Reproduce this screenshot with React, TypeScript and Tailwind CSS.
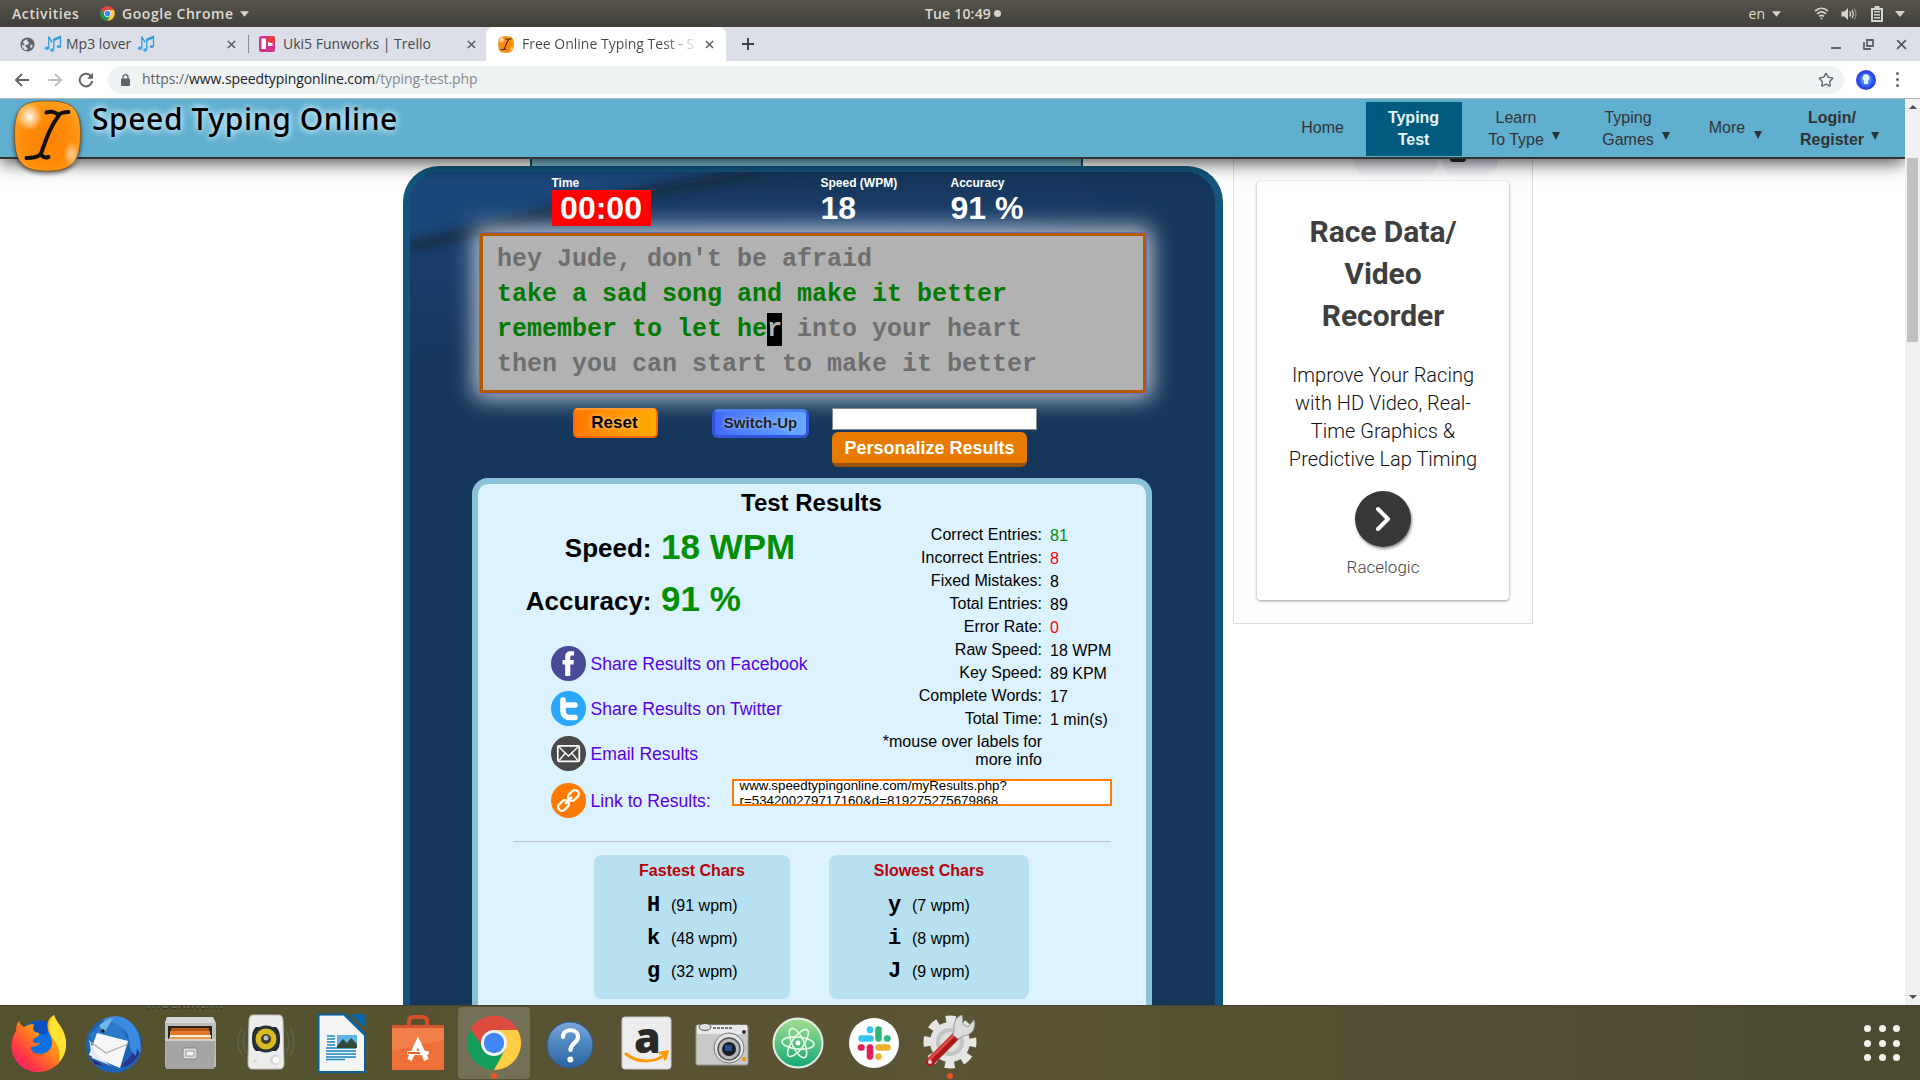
import React from "react";
import { ChevronRight, Star } from "lucide-react";

const UBUNTU = "font-['Open_Sans',sans-serif]";
const SANS = "font-['Liberation_Sans',Arial,sans-serif]";

function ChromeLogo({ className }: { className?: string }) {
  return (
    <svg viewBox="0 0 56 56" className={className}>
      <circle cx="28" cy="28" r="27" fill="#dd4b3e" />
      <path d="M28 28 L5 14 A27 27 0 0 0 28 55 L40 35 Z" fill="#129e5a" />
      <path d="M28 15 H51.7 A27 27 0 0 1 28 55 L39.5 34 Z" fill="#fdcd42" />
      <path d="M4.5 14.5 A27 27 0 0 1 51.7 15 H28 L16 31 Z" fill="#dd4b3e" />
      <circle cx="28" cy="28" r="13" fill="#f4f4f4" />
      <circle cx="28" cy="28" r="10.2" fill="#4285f4" />
    </svg>
  );
}

function Caret({ className }: { className?: string }) {
  return (
    <svg viewBox="0 0 10 6" className={className ?? "h-[6px] w-[9px]"}>
      <path d="M0 0h10L5 6z" fill="#d5d3cd" />
    </svg>
  );
}

function SystemBar() {
  return (
    <div className={`${UBUNTU} flex h-[27px] shrink-0 items-center bg-linear-to-b from-[#56534b] to-[#403f3a] text-[14px] font-semibold text-[#dfdbd2]`}>
      <div className="flex w-[640px] items-center pl-[12px]">
        <span className="w-[88px] tracking-[0.6px]">Activities</span>
        <ChromeLogo className="mr-[7px] h-[15px] w-[15px]" />
        <span className="mr-[6px] tracking-[0.55px]">Google Chrome</span>
        <Caret />
      </div>
      <div className="flex flex-1 items-center justify-center pl-[6px]">
        <span className="tracking-[0.2px]">Tue 10:49</span>
        <span className="ml-[3px] h-[7px] w-[7px] rounded-full bg-[#d5d3cd]" />
      </div>
      <div className="flex w-[640px] items-center justify-end pr-[15px]">
        <span className="mr-[7px] font-medium">en</span>
        <Caret />
        <svg viewBox="0 0 16 14" className="ml-[33px] h-[13px] w-[15px]" fill="none" stroke="#d5d3cd" strokeWidth="1.8">
          <path d="M1 4.5C5 .3 11 .3 15 4.5" />
          <path d="M3.2 7.5c3-2.8 6.600-2.800 9.600 0" />
          <path d="M5.400 10c1.700-1.400 3.500-1.400 5.200 0" />
          <circle cx="8" cy="12.400" r="1" fill="#d5d3cd" stroke="none" />
        </svg>
        <svg viewBox="0 0 16 14" className="ml-[12px] h-[14px] w-[16px]" fill="none" stroke="#d5d3cd" strokeWidth="1.3">
          <path d="M.5 4.500h3L7 1v12L3.500 9.500h-3z" fill="#d5d3cd" stroke="none" />
          <path d="M8.700 4.500q1.800 2.500 0 5M10.800 2.800q3 4.200 0 8.400" />
          <path d="M13 1.300q4 5.700 0 11.400" stroke="#8d8a84" />
        </svg>
        <svg viewBox="0 0 12 16" className="ml-[14px] h-[16px] w-[12px]">
          <path d="M3.500 0h5v2H12v14H0V2h3.500z" fill="#d5d3cd" />
          <path d="M2 4h8v10H2z" fill="#4a4842" />
          <path d="M3 5h6v1.500H3zM3 8h6v1.500H3zM3 11h6v1.500H3z" fill="#d5d3cd" />
        </svg>
        <Caret className="ml-[12px] h-[6px] w-[10px]" />
      </div>
    </div>
  );
}

function CloseX({ className }: { className?: string }) {
  return (
    <svg viewBox="0 0 10 10" className={className ?? "h-[9px] w-[9px]"} stroke="#55595f" strokeWidth="1.6">
      <path d="M1 1l8 8M9 1l-8 8" />
    </svg>
  );
}

function Notes() {
  return (
    <svg viewBox="0 0 18 18" className="h-[18px] w-[18px] shrink-0" fill="none" stroke="#2b9be0" strokeWidth="1.300">
      <path d="M4.800 13V1.500c.5 2.500 3 3 2.700 6" />
      <path d="M9.800 14V4.200L16.500 1.500V11" />
      <path d="M9.800 5L16.500 2.300" strokeWidth="2.200" />
      <g fill="#3aa7ec" stroke="none">
        <ellipse cx="3" cy="13.300" rx="2.300" ry="1.800" />
        <ellipse cx="8.200" cy="15" rx="2.100" ry="1.700" />
        <ellipse cx="14.900" cy="11.500" rx="2.100" ry="1.600" />
      </g>
    </svg>
  );
}

function CursorLogo({ className }: { className?: string }) {
  return (
    <svg viewBox="0 0 68 72" className={className}>
      <defs>
        <radialGradient id="orb" cx=".5" cy=".55" r=".65">
          <stop offset="0" stopColor="#ff8000" />
          <stop offset=".6" stopColor="#ff8c0a" />
          <stop offset="1" stopColor="#ffab2e" />
        </radialGradient>
        <radialGradient id="shine">
          <stop offset="0" stopColor="#fff" stopOpacity=".95" />
          <stop offset="1" stopColor="#fff" stopOpacity="0" />
        </radialGradient>
      </defs>
      <path d="M34 1C56 1 67 6 67 33S60 71 34 71 1 62 1 34 10 1 34 1z" fill="url(#orb)" stroke="#7d4a10" strokeOpacity=".7" strokeWidth="1" />
      <ellipse cx="16" cy="17" rx="13" ry="14" fill="url(#shine)" />
      <ellipse cx="58" cy="54" rx="8" ry="13" fill="url(#shine)" opacity=".6" />
      <path d="M33 12.500c6-2 9 0 12 2.500 3-3 6-3 10-3M45 16c-8 10-12 22-18 39M13 58c5-1 10 1 14-4 3 4 5 4 8 3" fill="none" stroke="#111" strokeWidth="4" strokeLinecap="round" />
    </svg>
  );
}

function TabStrip() {
  return (
    <div className={`${UBUNTU} flex h-[34px] shrink-0 bg-[#dcdfe7] text-[14px] text-[#45484d]`}>
      <div className="flex w-[248px] items-center pl-[20px]">
        <svg viewBox="0 0 16 16" className="mr-[9px] h-[15px] w-[15px]">
          <circle cx="8" cy="8" r="7.500" fill="#5f6368" />
          <path d="M3 5.500q2-3 5-3-1 2 .5 2.500t1 2-3 1.500.5 2.500-1.500 3Q2 12 2 8q2 1 3 .5zM11 8.500q2-1 2.500.5t-2.500 3z" fill="#dcdfe7" />
        </svg>
        <Notes />
        <span className="mx-[4px] mb-[2px] w-[67px] whitespace-nowrap">Mp3 lover</span>
        <Notes />
        <CloseX className="ml-[72px] h-[9px] w-[9px]" />
      </div>
      <div className="my-[8px] w-px bg-[#8b8e94]" />
      <div className="flex w-[237px] items-center pl-[10px]">
        <svg viewBox="0 0 16 16" className="mr-[8px] h-[16px] w-[16px]">
          <rect width="16" height="16" rx="2" fill="#d6348c" />
          <path d="M2.500 2.500h4.500v10.500H2.500zM9 6h4.500v4H9z" fill="#fff" />
          <circle cx="12.500" cy="3.500" r="3.500" fill="#ee3d37" />
        </svg>
        <span className="mb-[2px] w-[184px] whitespace-nowrap">Uki5 Funworks | Trello</span>
        <CloseX />
      </div>
      <div className="flex w-[240px] items-center rounded-t-[8px] bg-white pl-[12px]">
        <CursorLogo className="mr-[8px] h-[17px] w-[16px]" />
        <span className="mb-[2px] w-[177px] overflow-hidden whitespace-nowrap bg-linear-to-r from-[#45484d] from-80% to-transparent to-100% bg-clip-text text-transparent">Free Online Typing Test - S</span>
        <CloseX className="ml-[6px] h-[9px] w-[9px]" />
      </div>
      <div className="flex flex-1 items-center pl-[16px]">
        <svg viewBox="0 0 12 12" className="h-[12px] w-[12px]" stroke="#3c4043" strokeWidth="1.900">
          <path d="M6 0v12M0 6h12" />
        </svg>
      </div>
      <div className="flex items-center pr-[13px]">
        <span className="mt-[8px] mr-[22px] h-[2px] w-[10px] bg-[#5f6368]" />
        <svg viewBox="0 0 11 11" className="mr-[22px] h-[11px] w-[11px]" fill="none" stroke="#5f6368" strokeWidth="1.800">
          <path d="M4 1h6v6H4zM1 3v7h7" />
        </svg>
        <CloseX className="h-[11px] w-[11px]" />
      </div>
    </div>
  );
}

function Toolbar() {
  return (
    <div className={`${UBUNTU} flex h-[38px] shrink-0 items-center border-b border-[#b5b5b5] bg-white text-[14px]`}>
      <svg viewBox="0 0 16 14" className="ml-[14px] h-[14px] w-[16px]" fill="none" stroke="#5f6368" strokeWidth="1.900">
        <path d="M15 7H2M8 1L2 7l6 6" />
      </svg>
      <svg viewBox="0 0 16 14" className="ml-[17px] h-[14px] w-[16px]" fill="none" stroke="#bcbec1" strokeWidth="1.900">
        <path d="M1 7h13M8 1l6 6-6 6" />
      </svg>
      <svg viewBox="0 0 16 16" className="ml-[15px] h-[16px] w-[16px]" fill="none" stroke="#5f6368" strokeWidth="2">
        <path d="M13.500 5A6.300 6.300 0 1 0 14.200 9" />
        <path d="M15 .8v6H9z" fill="#5f6368" stroke="none" />
      </svg>
      <div className="ml-[14px] flex h-[28px] w-[1736px] items-center rounded-full bg-[#eef2f3] pl-[13px]">
        <svg viewBox="0 0 9 12" className="h-[12px] w-[9px]">
          <path d="M2 5V3.200a2.500 2.500 0 0 1 5 0V5" fill="none" stroke="#5f6368" strokeWidth="1.300" />
          <rect y="4.500" width="9" height="7.500" rx="1" fill="#5f6368" />
        </svg>
        <span className="mb-[2px] ml-[12px] flex-1 tracking-[-0.09px] text-[#85888c]">
          <span className="text-[#5f6368]">https://</span>
          <span className="text-[#202124]">www.speedtypingonline.com</span>/typing-test.php
        </span>
        <Star className="mr-[10px] h-[16px] w-[16px] text-[#5f6368]" strokeWidth={2} />
      </div>
      <div className="ml-[12px] flex h-[20px] w-[20px] items-center justify-center rounded-full bg-radial from-[#7fd0ff] via-[#2f50f5] to-[#2318b5]">
        <svg viewBox="0 0 8 12" className="h-[12px] w-[8px]">
          <path d="M4 0a3.600 3.600 0 0 1 2 6.500V10H2V6.500A3.600 3.600 0 0 1 4 0z" fill="#e2f5ff" />
        </svg>
      </div>
      <div className="ml-[20px] flex flex-col gap-[3px]">
        <span className="h-[3px] w-[3px] rounded-full bg-[#5f6368]" />
        <span className="h-[3px] w-[3px] rounded-full bg-[#5f6368]" />
        <span className="h-[3px] w-[3px] rounded-full bg-[#5f6368]" />
      </div>
    </div>
  );
}

function NavArrow({ className }: { className: string }) {
  return (
    <svg viewBox="0 0 8 8" className={`h-[8px] w-[8px] shrink-0 ${className}`}>
      <path d="M0 0h8L4 8z" fill="#2c3336" />
    </svg>
  );
}

function SiteHeader() {
  return (
    <header className="relative z-10 flex h-[60px] shrink-0 border-b-2 border-[#333] bg-[#60afcf] text-center text-[16px] leading-[22px] text-[#333] shadow-[0_3px_18px_rgba(0,0,0,0.75)]">
      <div className="flex w-[1366px] items-start">
        <CursorLogo className="mt-[1px] ml-[13px] h-[72px] w-[69px] shrink-0 drop-shadow-[0_2px_2px_rgba(0,0,0,0.6)]" />
        <span className="ml-[10px] font-['Noto_Sans',sans-serif] text-[30px] font-medium leading-[40px] tracking-[0.6px] whitespace-nowrap text-black [text-shadow:0_0_8px_#d5f0ff,0_0_6px_#d5f0ff]">
          Speed Typing Online
        </span>
        <span className="mt-[18px] mr-[22px] ml-auto">Home</span>
      </div>
      <div className="mt-[3px] flex h-[54px] w-[96px] flex-col justify-center bg-[#005b80] pr-px font-bold text-[#e8f4f8]">
        Typing
        <br />
        Test
      </div>
      <div className="flex items-start pt-[8px]">
        <span className="ml-[24px] w-[60px]">Learn To Type</span>
        <NavArrow className="mt-[25px] ml-[6px]" />
        <span className="ml-[38px] w-[60px]">Typing Games</span>
        <NavArrow className="mt-[25px] ml-[4px]" />
        <span className="mt-[10px] ml-[35px] w-[44px]">More</span>
        <NavArrow className="mt-[24px] ml-[5px]" />
        <span className="ml-[33px] w-[74px] font-bold">Login/ Register</span>
        <NavArrow className="mt-[25px] ml-[2px]" />
      </div>
    </header>
  );
}

function PanelWave() {
  return (
    <svg viewBox="0 0 805 300" className="absolute top-0 left-0 h-[300px] w-[805px]" preserveAspectRatio="none">
      <defs>
        <linearGradient id="waveLow" x1="0" y1="0" x2="0.12" y2="1">
          <stop offset="0" stopColor="#153453" />
          <stop offset=".35" stopColor="#1b4070" />
          <stop offset="1" stopColor="#15375c" />
        </linearGradient>
        <linearGradient id="waveFade" x1="0" y1="0" x2="1" y2="0">
          <stop offset=".65" stopColor="#15375c" stopOpacity="0" />
          <stop offset=".95" stopColor="#15375c" />
        </linearGradient>
        <filter id="waveSoft" x="-20%" y="-60%" width="140%" height="220%">
          <feGaussianBlur stdDeviation="5" />
        </filter>
        <clipPath id="waveClip">
          <path d="M0 0H345C220 18 120 46 0 74z" />
        </clipPath>
      </defs>
      <path d="M0 74C120 46 220 18 345 0H805V40C500 60 250 120 0 190z" fill="url(#waveLow)" />
      <path d="M0 74C120 46 220 18 345 0" fill="none" stroke="#132f48" strokeWidth="14" filter="url(#waveSoft)" />
      <path d="M0 0H345C220 18 120 46 0 74z" fill="#1c4778" />
      <g clipPath="url(#waveClip)">
        <path d="M-20 80C120 46 220 18 365 -4" fill="none" stroke="#142f4c" strokeWidth="12" filter="url(#waveSoft)" />
      </g>
      <rect width="805" height="300" fill="url(#waveFade)" />
    </svg>
  );
}

function TypingBoard() {
  return (
    <div className="relative mt-[5px] ml-[70px] h-[160px] w-[666px] border-[3px] border-[#b45a00] bg-[#b2b2b2] pt-[6px] pl-[14px] font-['Liberation_Mono','Courier_New',monospace] text-[25px] leading-[35px] font-bold whitespace-pre text-[#6e6e6e] shadow-[0_0_0_1px_#6d6bb5,0_0_22px_5px_rgba(255,255,255,0.75)]">
      <div>hey Jude, don't be afraid</div>
      <div className="text-[#007a00]">take a sad song and make it better</div>
      <div>
        <span className="text-[#007a00]">remember to let he</span>
        <span className="bg-black py-[2px] text-[#b2b2b2]">r</span> into your heart
      </div>
      <div>then you can start to make it better</div>
    </div>
  );
}

const stats = [
  { label: "Correct Entries:", value: "81", tone: "text-[#008f00]" },
  { label: "Incorrect Entries:", value: "8", tone: "text-[#ff0000]" },
  { label: "Fixed Mistakes:", value: "8", tone: "text-black" },
  { label: "Total Entries:", value: "89", tone: "text-black" },
  { label: "Error Rate:", value: "0", tone: "text-[#ff0000]" },
  { label: "Raw Speed:", value: "18 WPM", tone: "text-black" },
  { label: "Key Speed:", value: "89 KPM", tone: "text-black" },
  { label: "Complete Words:", value: "17", tone: "text-black" },
  { label: "Total Time:", value: "1 min(s)", tone: "text-black" },
];

function ShareRow({ icon, text }: { icon: React.ReactNode; text: string }) {
  return (
    <div className="flex h-[35px] gap-[4.500px] text-[17.6px] leading-[36px] text-[#5a00e8]">
      {icon}
      <span className="whitespace-nowrap">{text}</span>
    </div>
  );
}

const facebook = (
  <svg viewBox="0 0 35 35" className="h-[35px] w-[35px] shrink-0">
    <circle cx="17.500" cy="17.500" r="17.500" fill="#484a96" />
    <path d="M14.200 30V18.500h-2.700V14h2.700v-2.800c0-4 1.900-5.900 5.300-5.900H23v4.300h-2c-1.300 0-1.700.6-1.700 1.800V14H23l-.5 4.500h-3.200V30z" fill="#fff" />
  </svg>
);
const twitter = (
  <svg viewBox="0 0 35 35" className="h-[35px] w-[35px] shrink-0">
    <circle cx="17.500" cy="17.500" r="17.500" fill="#2aa6fa" />
    <path d="M12 9v10.500c0 4.500 2.500 7 6.500 7H24M12 14h12" fill="none" stroke="#fff" strokeWidth="5.600" strokeLinecap="round" />
  </svg>
);
const mail = (
  <svg viewBox="0 0 35 35" className="h-[35px] w-[35px] shrink-0">
    <circle cx="17.500" cy="17.500" r="17.500" fill="#484848" />
    <rect x="6.800" y="9.800" width="21.500" height="15.500" rx="1" fill="none" stroke="#fff" strokeWidth="1.700" />
    <path d="M8 11l9.500 9L27 11M8 24.500l6-7M27 24.500l-6-7" fill="none" stroke="#fff" strokeWidth="1.300" />
  </svg>
);
const link = (
  <svg viewBox="0 0 35 35" className="h-[35px] w-[35px] shrink-0">
    <circle cx="17.500" cy="17.500" r="17.500" fill="#ff7a00" />
    <g fill="none" stroke="#fff" strokeWidth="2.300" transform="rotate(-45 17.500 17.500)">
      <rect x="4.500" y="13.700" width="12" height="7.600" rx="3.800" />
      <rect x="18.500" y="13.700" width="12" height="7.600" rx="3.800" />
      <path d="M12.500 17.500h10" strokeWidth="2.800" />
    </g>
  </svg>
);

function CharCard({ title, width, pad, rows }: { title: string; width: string; pad: string; rows: string[][] }) {
  return (
    <div className={`h-[144px] rounded-[8px] bg-[#b7e1f0] pt-[4px] ${width}`}>
      <div className="mb-[6px] text-center text-[16px] leading-[24px] font-bold text-[#bb0008]">{title}</div>
      {rows.map(([c, v]) => (
        <div key={c} className={`flex h-[33px] items-baseline text-[16px] leading-[33px] ${pad}`}>
          <span className="w-[24px] font-['Liberation_Mono',monospace] text-[22px] leading-[33px] font-bold">{c}</span>
          <span>{v}</span>
        </div>
      ))}
    </div>
  );
}

function Results() {
  return (
    <section className="relative mt-[11px] ml-[62px] h-[540px] w-[680px] rounded-t-[16px] border-[6px] border-[#8ac3d8] bg-[#dcf2ff] pt-[4px] text-black">
      <h2 className="pr-px text-center text-[24px] leading-[30px] font-bold">Test Results</h2>
      <div className="flex h-[261px]">
        <div className="w-[260px] shrink-0 pt-[3px]">
          <div className="flex h-[52px] gap-[9.500px] leading-[52px] font-bold whitespace-nowrap">
            <span className="mt-px w-[173.500px] shrink-0 text-right text-[26px]">Speed:</span>
            <span className="text-[35px] text-[#008f00]">18 WPM</span>
          </div>
          <div className="flex h-[52px] gap-[9.500px] leading-[52px] font-bold whitespace-nowrap">
            <span className="mt-[2px] w-[173.500px] shrink-0 text-right text-[26px]">Accuracy:</span>
            <span className="text-[35px] text-[#008f00]">91 %</span>
          </div>
          <div className="mt-[21px] ml-[73px] flex flex-col gap-[10px]">
            <ShareRow icon={facebook} text="Share Results on Facebook" />
            <ShareRow icon={twitter} text="Share Results on Twitter" />
            <ShareRow icon={mail} text="Email Results" />
          </div>
        </div>
        <div className="w-[408px] pt-[5px] text-[16px]">
          {stats.map((s) => (
            <div key={s.label} className="flex h-[23px] leading-[23px]">
              <span className="w-[304px] text-right">{s.label}</span>
              <span className={`mt-px ml-[8px] ${s.tone}`}>{s.value}</span>
            </div>
          ))}
          <div className="mt-[3px] w-[304px] text-right leading-[18px]">
            *mouse over labels for
            <br />
            more info
          </div>
        </div>
      </div>
      <div className="flex h-[39px]">
        <div className="mt-[4px] ml-[73px] w-[181px]">
          <ShareRow icon={link} text="Link to Results:" />
        </div>
        <div className="h-[27px] w-[380px] overflow-hidden border-2 border-[#ff7a00] bg-white pl-[5.500px] text-[13.333px] leading-[15px]">
          <div className="-mt-[3px]">www.speedtypingonline.com/myResults.php?</div>
          <div>r=534200279717160&amp;d=819275275679868</div>
        </div>
      </div>
      <div className="mt-[23px] ml-[35px] h-px w-[598px] bg-[#bfc3cc]" />
      <div className="mt-[13px] ml-[116px] flex gap-[39px]">
        <CharCard title="Fastest Chars" width="w-[196px]" pad="pl-[53px]" rows={[["H", "(91 wpm)"], ["k", "(48 wpm)"], ["g", "(32 wpm)"]]} />
        <CharCard title="Slowest Chars" width="w-[200px]" pad="pl-[59px]" rows={[["y", "(7 wpm)"], ["i", "(8 wpm)"], ["J", "(9 wpm)"]]} />
      </div>
    </section>
  );
}

function MainPanel() {
  return (
    <div className="w-[820px] shrink-0">
      <div className="ml-[127px] h-[7px] w-[553px] border-x-2 border-[#1f4a73] bg-[#7fc0d4]" />
      <div className="h-[839px] overflow-hidden rounded-t-[36px] bg-[#13557c] pt-[6px] pr-[8px] pl-[7px]">
        <div className="relative h-full overflow-hidden rounded-t-[30px] bg-[#15375c]">
          <PanelWave />
          <div className="relative z-10 flex h-[54px] pt-px text-[12px] leading-[20px] font-bold text-white">
            <div className="ml-[141.500px] w-[269px]">
              <div className="h-[17px]">Time</div>
              <div className="h-[36px] w-[99px] bg-[#ff0000] text-center text-[32px] leading-[36px]">00:00</div>
            </div>
            <div className="w-[130px]">
              <div className="h-[17px]">Speed (WPM)</div>
              <div className="text-[32px] leading-[36px]">18</div>
            </div>
            <div>
              <div className="h-[17px]">Accuracy</div>
              <div className="text-[32px] leading-[36px]">91 %</div>
            </div>
          </div>
          <div className="h-[2px]" />
          <TypingBoard />
          <div className="relative mt-[15px] flex h-[59px] items-start font-bold">
            <button className="ml-[163px] h-[30px] w-[85px] rounded-[5px] border-2 border-[#f26a00] border-t-[#ff9a2e] bg-linear-to-r from-[#ff7800] to-[#ffab00] pr-[2px] text-[17px] leading-[24px] text-black [text-shadow:0_0_5px_#ffd9a0]">
              Reset
            </button>
            <button className="mt-px ml-[54px] h-[29px] w-[97px] rounded-[6px] border-[3px] border-[#3357d8] border-t-[#4f80f0] bg-linear-to-r from-[#4468ff] to-[#66a8ff] pb-[2px] text-[15px] leading-[21px] whitespace-nowrap text-[#222] [text-shadow:0_0_5px_#b5d5ff]">
              Switch-Up
            </button>
            <div className="ml-[23px] flex flex-col gap-[2px]">
              <input className="h-[22px] w-[205px] border border-[#8a8a8a] bg-white" />
              <button className="h-[35px] w-[195px] rounded-[6px] border-b-4 border-[#9c5310] bg-[#e67b00] pt-[2px] text-[18px] leading-[29px] text-white">
                Personalize Results
              </button>
            </div>
          </div>
          <Results />
        </div>
      </div>
    </div>
  );
}

function Ad() {
  return (
    <aside className="ml-[10px] h-[465px] w-[300px] border border-t-0 border-[#dedede] bg-[#fdfdfd] font-[Roboto,sans-serif]">
      <div className="flex h-[22px] justify-end gap-[4px] pr-[34px]">
        <span className="h-[20px] w-[84px] rounded-b-full bg-linear-to-b from-[#e8e9f3] to-[#fdfdfd]" />
        <span className="flex h-[20px] w-[56px] items-start rounded-b-full bg-linear-to-b from-[#e3e5f3] to-[#fdfdfd]">
          <span className="ml-[8px] h-[3px] w-[16px] rounded-b-full bg-[#2b2d33]" />
        </span>
      </div>
      <div className="ml-[23px] flex h-[419px] w-[252px] flex-col items-center rounded-[4px] bg-white pt-[30px] text-center shadow-[0_1px_3px_rgba(0,0,0,0.4)]">
        <div className="text-[30px] leading-[42px] font-bold tracking-[-0.05px] whitespace-nowrap text-[#3f3f3f]">
          Race Data/
          <br />
          Video
          <br />
          Recorder
        </div>
        <div className="mt-[24px] text-[20px] leading-[28px] font-light whitespace-nowrap text-[#111]">
          Improve Your Racing
          <br />
          with HD Video, Real-
          <br />
          Time Graphics &amp;
          <br />
          Predictive Lap Timing
        </div>
        <div className="mt-[18px] flex h-[56px] w-[56px] items-center justify-center rounded-full bg-[#383838] shadow-[1px_2px_3px_rgba(0,0,0,0.45)]">
          <ChevronRight className="h-[40px] w-[40px] text-white" strokeWidth={2.4} />
        </div>
        <div className="mt-[8px] text-[17px] leading-[24px] font-light text-[#444]">Racelogic</div>
      </div>
    </aside>
  );
}

function Scrollbar() {
  return (
    <div className="flex w-[15px] flex-col items-center bg-[#f1f1f1]">
      <svg viewBox="0 0 8 4" className="mt-[6px] h-[4px] w-[8px]">
        <path d="M0 4h8L4 0z" fill="#505050" />
      </svg>
      <div className="mt-[49px] h-[184px] w-[11px] bg-[#c1c1c1]" />
      <svg viewBox="0 0 8 4" className="mt-auto mb-[6px] h-[4px] w-[8px]">
        <path d="M0 0h8L4 4z" fill="#505050" />
      </svg>
    </div>
  );
}

const dockIcons: { name: string; art: React.ReactNode }[] = [
  {
    name: "Firefox",
    art: (
      <>
        <defs>
          <linearGradient id="ffo" x1="1" y1="0" x2="0" y2="1">
            <stop offset="0" stopColor="#ffe226" />
            <stop offset=".45" stopColor="#ff8a16" />
            <stop offset=".75" stopColor="#ff3647" />
            <stop offset="1" stopColor="#e31587" />
          </linearGradient>
        </defs>
        <circle cx="33" cy="33" r="23" fill="#0a6fe0" />
        <path d="M18 18c8-10 20-10 26-6l-4 12z" fill="#0a4fc0" />
        <path d="M13 10c1 3 3 5 5 6 3-2 7-3 10-3-1 3-1 5 0 7 2 2 6 1 5 4-2 3-6 3-6 6s5 2 7 2c-2 3-6 4-9 4-1 5 7 9 14 6 8-4 9-12 4-20-3-8-2-14 5-18 2 8 12 13 12 29 0 17-13 28-28 28S5 49 5.500 34C6 26 9 22 10 20c0-4 1-8 3-10z" fill="url(#ffo)" />
        <path d="M48 4c2 8 12 15 12 29 0 8-3 14-7 18 2-12-1-17-7-25-4-8-3-17 2-22z" fill="#ffe432" />
      </>
    ),
  },
  {
    name: "Thunderbird",
    art: (
      <>
        <circle cx="32" cy="34" r="28" fill="#1e62b5" />
        <path d="M38 56c12 0 20-10 22-24l-3-8c-2 14-8 22-19 32z" fill="#2b3590" />
        <path d="M20 9c10-6 24-5 32 6 7 9 8 20 6 28l-3-6-1 8-5-5-3-16c-6-10-16-13-26-15z" fill="#3a8ae0" />
        <path d="M7 24l12-10c6-5 15-3 20 2l8 14-31 8z" fill="#2a7ac8" />
        <path d="M7 44l8-22 31 8-8 27z" fill="#f6f6f8" />
        <path d="M7 30L24 42l22-9" fill="none" stroke="#aaa" strokeWidth="1.200" />
        <path d="M7 28c4 10 8 22 30 30L10 47z" fill="#e6e8ee" />
        <path d="M17 15q6-7 14-8l-8 14z" fill="#70b8ea" />
        <circle cx="21" cy="20" r="1.800" fill="#1a1a1a" />
        <path d="M10 48l12 7-9-2z" fill="#3b1d6e" />
      </>
    ),
  },
  {
    name: "Files",
    art: (
      <>
        <path d="M9 6h46l3 6v44H7V12z" fill="#bdbdbd" />
        <path d="M9 6h46l2 6H7z" fill="#d6d6d6" />
        <rect x="10" y="15" width="44" height="18" fill="#2a2420" />
        <path d="M13 17h38v5H13z" fill="#b35419" />
        <path d="M12 20h40v5H12z" fill="#e07b2c" />
        <path d="M12 24h41v3H12z" fill="#fff0dd" />
        <path d="M11 26h42v4H11z" fill="#e59a4c" />
        <path d="M7 28h50l-1 30H8z" fill="#a5a5a5" />
        <path d="M7 28h50v2H7z" fill="#cfcfcf" />
        <rect x="25" y="37" width="14" height="11" rx="2" fill="#ddd" stroke="#888" />
        <rect x="28" y="40" width="8" height="5" fill="#f4f4f4" stroke="#999" />
      </>
    ),
  },
  {
    name: "Rhythmbox",
    art: (
      <>
        <path d="M8 18q-8 12 0 26M56 18q8 12 0 26M12 20q-6 11 0 22M52 20q6 11 0 22" fill="none" stroke="#6f8796" strokeOpacity=".3" strokeWidth="1.500" />
        <path d="M19 4h26q4 0 4 6l1 42q0 6-4 6H18q-4 0-4-6l1-42q0-6 4-6z" fill="#ececea" stroke="#bbb" />
        <path d="M22 16h20q4 3 4 12t-4 12H22q-4-3-4-12t4-12z" fill="#20262b" />
        <circle cx="32" cy="28" r="13.500" fill="#27323a" />
        <circle cx="32" cy="28" r="10.500" fill="#d9bd1e" />
        <circle cx="32" cy="28" r="5" fill="#3c3a34" />
        <circle cx="32" cy="27" r="2.500" fill="#bbb" />
        <circle cx="41" cy="49" r="5" fill="#d2d2cf" />
        <circle cx="42" cy="49" r="3.500" fill="#f7f7f5" />
        <circle cx="21" cy="50" r="1.800" fill="#d4d4d1" />
      </>
    ),
  },
  {
    name: "Writer",
    art: (
      <>
        <path d="M8.500 3.500H34L55 24v37H8.500z" fill="#f5f5f5" stroke="#075f9c" strokeWidth="2" />
        <path d="M40 3h16v15z" fill="#0b66a5" />
        <path d="M33 3.500l22 22v-4L37 3.500z" fill="#0b66a5" />
        <g stroke="#1783bd" strokeWidth="1.300">
          <path d="M17 25h8M17 28h8M17 31h8M17 34h8M16 37h30M16 40h30M16 43h30M16 46h30M16 48.500h19" />
        </g>
        <rect x="27" y="24" width="20" height="13" fill="#5fb2e8" />
        <path d="M27 35l6-7 4 4 4-5 6 6v4H27z" fill="#2f4a3a" />
      </>
    ),
  },
  {
    name: "Software",
    art: (
      <>
        <path d="M23 20V11q0-5 5-5h8q5 0 5 5v9" fill="none" stroke="#d5502a" strokeWidth="4" />
        <path d="M6 14h52v4H6z" fill="#d65830" />
        <path d="M6 17h52v42H6z" fill="#ee6f38" />
        <path d="M6 17h52v12L6 40z" fill="#f58a55" fillOpacity=".6" />
        <path d="M23.500 49L32 31l8.500 18" fill="none" stroke="#fff" strokeWidth="4.800" />
        <rect x="21" y="40" width="22" height="4" rx="2" fill="#fff" />
        <rect x="22" y="41" width="12" height="2" fill="#e5602c" />
      </>
    ),
  },
  { name: "Chrome", art: null },
  {
    name: "Help",
    art: (
      <>
        <defs>
          <linearGradient id="helpBlue" x1="0" y1="0" x2="0" y2="1">
            <stop offset="0" stopColor="#7ba7dc" />
            <stop offset=".5" stopColor="#4a84bd" />
            <stop offset="1" stopColor="#2c649f" />
          </linearGradient>
        </defs>
        <circle cx="32" cy="34" r="23" fill="url(#helpBlue)" stroke="#2b5a8e" />
        <path d="M25 26c0-9 15-9 15 0 0 6-7.500 6-7.500 13" fill="none" stroke="#fff" strokeWidth="4.200" strokeLinecap="round" />
        <circle cx="32.300" cy="48.500" r="3" fill="#fff" />
      </>
    ),
  },
  {
    name: "Amazon",
    art: (
      <>
        <rect x="8" y="6" width="49" height="52" rx="3" fill="#ededed" stroke="#c9c9c9" />
        <text x="20" y="42" fontFamily="Open Sans, sans-serif" fontSize="43" fontWeight="800" fill="#2a2a2a">a</text>
        <path d="M12 43c11 9 29 9 38 1M46 42l7-1-2 7" fill="none" stroke="#ff9900" strokeWidth="3" strokeLinecap="round" />
      </>
    ),
  },
  {
    name: "Camera",
    art: (
      <>
        <rect x="6" y="14" width="52" height="40" rx="2" fill="#c9c9c9" stroke="#989898" />
        <rect x="7" y="14" width="50" height="9" fill="#e9e9e9" />
        <ellipse cx="15" cy="16" rx="6" ry="3.500" fill="#ddd" stroke="#555" />
        <path d="M23 17h20" stroke="#777" strokeWidth="2" strokeDasharray="3 1" />
        <circle cx="39" cy="37" r="15" fill="#e4e4e4" stroke="#777" />
        <circle cx="39" cy="38" r="11" fill="#b8b8b8" stroke="#555" strokeWidth="1.500" />
        <circle cx="39" cy="38" r="7" fill="#1a1e28" />
        <rect x="35" y="34" width="7" height="6" fill="#1f4f96" />
        <circle cx="54" cy="21" r="2" fill="#333" />
        <rect x="52" y="46" width="4" height="4" fill="#e39a2b" />
      </>
    ),
  },
  {
    name: "Atom",
    art: (
      <>
        <defs>
          <linearGradient id="atomGreen" x1="0" y1="0" x2="0" y2="1">
            <stop offset="0" stopColor="#a5de8e" />
            <stop offset="1" stopColor="#12a877" />
          </linearGradient>
        </defs>
        <circle cx="32" cy="32" r="24.500" fill="url(#atomGreen)" stroke="#e5eee5" strokeWidth="2" />
        <g fill="none" stroke="#e9fbe9" strokeWidth="1.600">
          <ellipse cx="32" cy="32" rx="6" ry="16" transform="rotate(-25 32 32)" />
          <ellipse cx="32" cy="32" rx="6" ry="16" transform="rotate(35 32 32)" />
          <ellipse cx="32" cy="32" rx="6" ry="16" transform="rotate(95 32 32)" />
        </g>
        <circle cx="32" cy="32" r="2.400" fill="#fff" />
      </>
    ),
  },
  {
    name: "Slack",
    art: (
      <>
        <circle cx="32" cy="32" r="25" fill="#fff" />
        <g strokeWidth="6.500" strokeLinecap="round">
          <path d="M19.500 27.500h9" stroke="#36c5f0" />
          <path d="M28 18.500v.5" stroke="#36c5f0" />
          <path d="M36.500 18.500v9" stroke="#2eb67d" />
          <path d="M45 27.500h.5" stroke="#2eb67d" />
          <path d="M36.500 36.500h9" stroke="#ecb22e" />
          <path d="M36.500 45.500v.3" stroke="#ecb22e" />
          <path d="M28 36.500v9" stroke="#e01e5a" />
          <path d="M19 36.500h.5" stroke="#e01e5a" />
        </g>
      </>
    ),
  },
  {
    name: "Settings",
    art: (
      <>
        <circle cx="32" cy="31" r="22.500" fill="none" stroke="#e6e6e4" strokeWidth="8" strokeDasharray="9.600 8.070" strokeDashoffset="4.800" />
        <circle cx="32" cy="31" r="20" fill="#e4e4e4" />
        <circle cx="32" cy="31" r="14" fill="#c4c4c4" />
        <circle cx="32" cy="31" r="10" fill="#dedede" />
        <path d="M12 51L38 25" stroke="#a81a1a" strokeWidth="8.500" strokeLinecap="round" />
        <path d="M11 49L36 24" stroke="#e04a44" strokeWidth="3" strokeLinecap="round" />
        <path d="M36 20c-1-9 2-14 8-16l1 9 5 3 6-7c2 9-2 15-11 16l-5 3-5-4z" fill="#dcdcdc" stroke="#999" />
        <circle cx="12" cy="51" r="2" fill="#d9d9d9" />
      </>
    ),
  },
];

function Dock() {
  return (
    <div className="relative flex h-[75px] shrink-0 items-center overflow-hidden border-t border-[#45432f] bg-linear-to-r from-[#53522d] via-[#5b5335] to-[#4b4a2e]">
      <span className={`${UBUNTU} absolute -top-[13px] left-[147px] text-[14px] leading-[20px] tracking-[0.7px] text-[#77776a] [text-shadow:0_1px_1px_#222]`}>index.html</span>
      {dockIcons.map((d) => (
        <div key={d.name} title={d.name} className="flex w-[76px] shrink-0 justify-center">
          {d.name === "Chrome" ? (
            <div className="relative flex h-[72px] w-[72px] items-center justify-center rounded-[4px] bg-[#7b7860]/80">
              <ChromeLogo className="h-[56px] w-[56px]" />
              <span className="absolute bottom-0 h-[6px] w-[6px] rounded-full bg-[#e95420]" />
            </div>
          ) : (
            <div className="relative flex h-[72px] items-center justify-center">
              <svg viewBox="0 0 64 64" className="h-[64px] w-[64px]">{d.art}</svg>
              {d.name === "Settings" && <span className="absolute bottom-0 h-[6px] w-[6px] rounded-full bg-[#e95420]" />}
            </div>
          )}
        </div>
      ))}
      <div className="mr-[20px] ml-auto grid grid-cols-3 gap-[7.500px]">
        {Array.from({ length: 9 }, (_, i) => (
          <span key={i} className="h-[7px] w-[7px] rounded-full bg-[#f2f1ee]" />
        ))}
      </div>
    </div>
  );
}

export default function App() {
  return (
    <div className="flex h-[1080px] w-[1920px] flex-col overflow-hidden bg-white">
      <SystemBar />
      <TabStrip />
      <Toolbar />
      <div className={`${SANS} flex h-[906px] shrink-0`}>
        <div className="flex w-[1905px] flex-col overflow-hidden">
          <SiteHeader />
          <main className="flex h-[846px] shrink-0 pl-[403px]">
            <MainPanel />
            <Ad />
          </main>
        </div>
        <Scrollbar />
      </div>
      <Dock />
    </div>
  );
}
